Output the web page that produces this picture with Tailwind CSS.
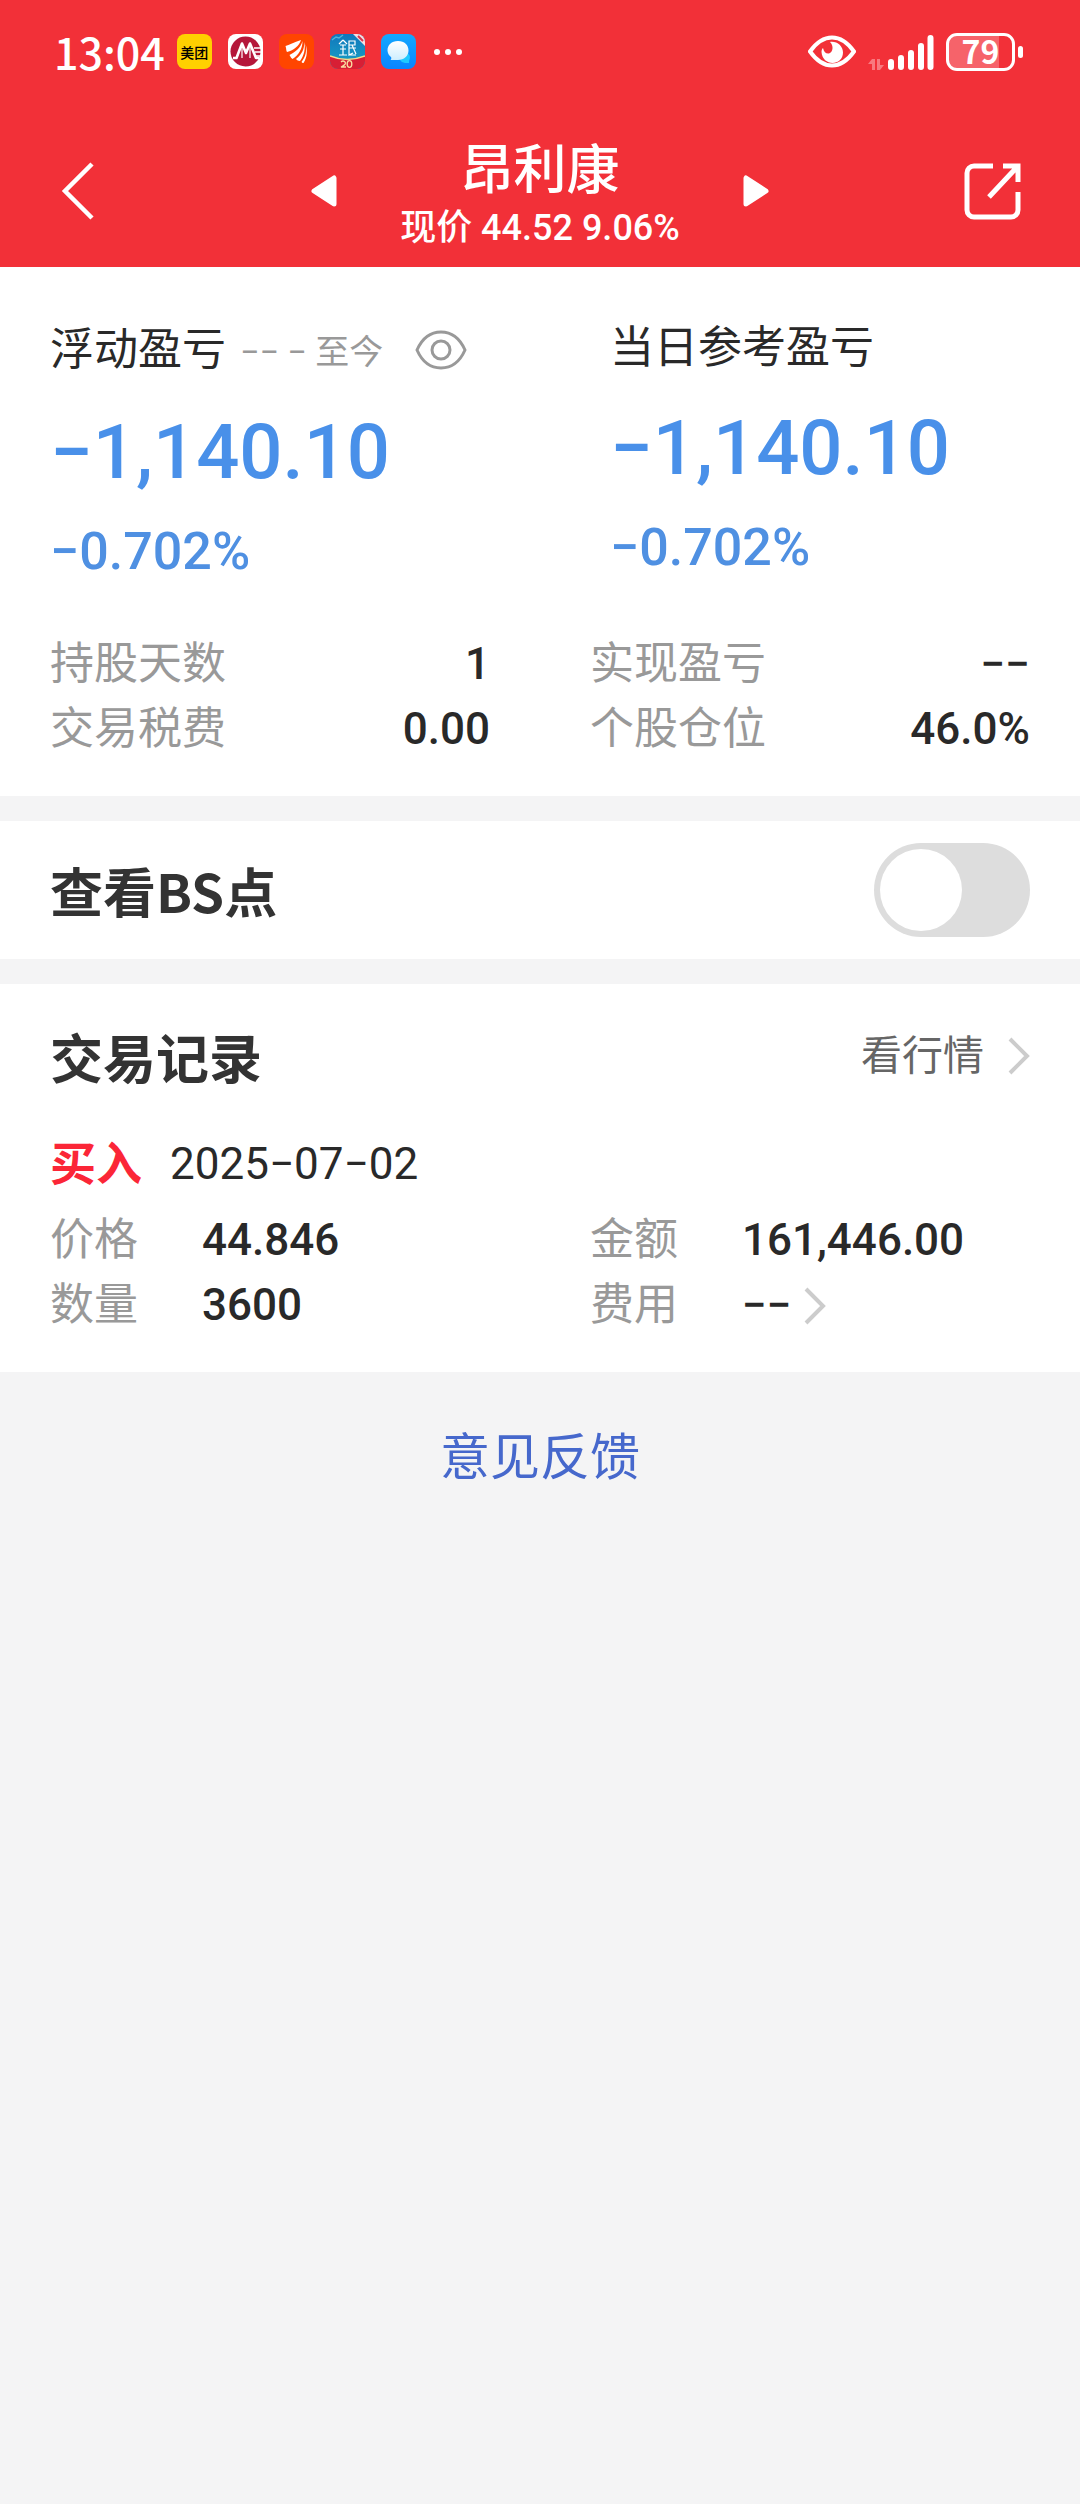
<!DOCTYPE html>
<html lang="zh-CN">
<head>
<meta charset="utf-8">
<meta name="viewport" content="width=device-width, initial-scale=1">
<title>昂利康</title>
<script src="https://cdn.jsdelivr.net/npm/@tailwindcss/browser@4"></script>
</head>
<body class="min-h-screen bg-[#f4f4f5] font-['Roboto','Noto_Sans_CJK_SC',sans-serif] text-[44px] leading-[60px] text-[#292929]">

<header class="bg-[#f23038] text-white">
  <!-- status bar -->
  <div class="flex h-[103px] items-center justify-between pl-[54px] pr-[57px]">
    <div class="flex items-center gap-4">
      <span class="-mr-1 pb-[2px] font-['Noto_Sans_CJK_SC',sans-serif] text-[43px] font-medium">13:04</span>
      <span class="flex size-[35px] items-center justify-center rounded-lg bg-[#ffd000] font-['Noto_Sans_CJK_SC',sans-serif] text-[14px] leading-none font-medium text-black">美团</span>
      <svg class="size-[35px]" viewBox="0 0 35 35" aria-hidden="true">
        <rect width="35" height="35" rx="8" fill="#fff"/>
        <circle cx="17.500" cy="17.500" r="15" fill="#b5173a"/>
        <path d="M26 14h8M27 18h7M28 22h6" fill="none" stroke="#fff" stroke-width="1.500"/>
        <path d="M5 24h3.500L14 9.500l4 9.500 4-9.500L28 24h3" fill="none" stroke="#fff" stroke-width="2.600" stroke-linejoin="round"/>
        <path d="M14 12v12M22 12v12" fill="none" stroke="#fff" stroke-width="1.200"/>
      </svg>
      <svg class="size-[35px]" viewBox="0 0 35 35" aria-hidden="true">
        <rect width="35" height="35" rx="8" fill="#ff4500"/>
        <path d="M22 6C15 8 10 11 6.500 12c1 3 .5 5 1.500 6 7-2 12-6 14-12zM23.500 7c-2 7-7 11-13 14 1 1 1 3 3 4 6-4 10-10 10-18zM25 8c1 7-3 13-8 17 1 1 2 2 4 2 4-5 6-13 4-19zM26.500 10c1.500 7 0 13-4 18 1 1 1 1 2 1 4-6 4-13 2-19z" fill="#fff"/>
      </svg>
      <svg class="size-[35px]" viewBox="0 0 35 35" aria-hidden="true">
        <defs>
          <clipPath id="bankTile"><rect width="35" height="35" rx="8"/></clipPath>
          <linearGradient id="bankSky" x1="0" y1="0" x2="0" y2="1"><stop stop-color="#1277bd"/><stop offset="1" stop-color="#18a5c4"/></linearGradient>
        </defs>
        <g clip-path="url(#bankTile)">
          <rect width="35" height="35" fill="url(#bankSky)"/>
          <path d="M23 0h12v12z" fill="#f4dfe2"/>
          <path d="M28 2l5 5" stroke="#d8344c" stroke-width="2"/>
          <path d="M0 22q17 7 35 0v13H0z" fill="#d71f35"/>
          <path d="M0 22q17 7 35 0" fill="none" stroke="#f6d98a" stroke-width="1.500"/>
          <path d="M2 6l4-3 3 1 4-3" fill="none" stroke="#4fb4dc" stroke-width="1.500"/>
          <path d="M13 6l-4 4m4-4l4 4M10 11h6M10 15h6M13 11v10M9 21h8M19 7h6v4h-6zv14l4-2M19 14h7M22 11l4 9M20 21h6" fill="none" stroke="#fff" stroke-width="1.200"/>
          <path d="M11 28q2-2 4 0t-4 5h5" fill="none" stroke="#f9dca0" stroke-width="1.300"/>
          <ellipse cx="19.500" cy="30" rx="2.300" ry="3.300" fill="none" stroke="#f9dca0" stroke-width="1.300"/>
        </g>
      </svg>
      <svg class="size-[35px]" viewBox="0 0 35 35" aria-hidden="true">
        <defs>
          <linearGradient id="chatTile" x1="0" y1="0" x2="0" y2="1"><stop stop-color="#12a8ff"/><stop offset="1" stop-color="#0a84ff"/></linearGradient>
          <linearGradient id="chatBubble" x1="0" y1="0" x2="0" y2="1"><stop stop-color="#fff"/><stop offset="1" stop-color="#cdeeff"/></linearGradient>
        </defs>
        <rect width="35" height="35" rx="8" fill="url(#chatTile)"/>
        <path d="M25 18a6 6 0 0 1 3 9v2h-4a6 6 0 0 1-5-3z" fill="#1fc9ff"/>
        <path d="M17 7c6.500 0 10.500 4 10.500 9.500S23 26 17 26H9.500c1-1 1-2 .5-3-2-1.500-3.500-4-3.500-6.500C6.500 11 10.500 7 17 7z" fill="url(#chatBubble)"/>
      </svg>
      <svg class="ml-[2px] h-[6px] w-7" viewBox="0 0 28 6" fill="#fff" aria-hidden="true"><circle cx="3" cy="3" r="3"/><circle cx="14" cy="3" r="3"/><circle cx="25" cy="3" r="3"/></svg>
    </div>
    <div class="flex items-center">
      <svg class="mr-3 h-[33px] w-12" viewBox="0 0 48 33" aria-hidden="true">
        <path d="M2 16.500Q12 2.500 24 2.500t22 14Q36 30.500 24 30.500T2 16.500z" fill="none" stroke="#fff" stroke-width="4"/>
        <path d="M22 7c7-1 13 4 13 10.500S30 28 24.500 28 14 24 13.500 17c0-2 .5-3 1.500-4 1 4 3 6 6 5.500 4-1 5-8 1-11.500z" fill="#fff"/>
      </svg>
      <svg class="mr-3 h-9 w-[66px]" viewBox="0 0 66 36" aria-hidden="true">
        <path d="M0 30l4-5h3v11H4v-6zM9 25h3v6h4l-4 5H9z" fill="#f8797f"/>
        <g stroke="#fff" stroke-width="6" stroke-linecap="round"><path d="M23 28v5M33 24v9M43 19v14M53 12v21M62.500 4v29"/></g>
      </svg>
      <div class="flex h-[38px] w-[69px] items-center justify-center rounded-[11px] border-3 border-white bg-linear-to-r from-[#f6636a] from-80% to-[#f23038] to-80% pb-[3px] font-['Noto_Sans_CJK_SC',sans-serif] text-[32px] leading-none font-bold">79</div>
      <div class="ml-[3px] h-3 w-[5px] rounded-full bg-white"></div>
    </div>
  </div>

  <!-- title bar -->
  <div class="flex items-center justify-between px-[58px] pt-3">
    <button type="button" aria-label="返回" class="flex h-[152px] w-[60px] items-center">
      <svg class="h-[58px] w-[38px]" viewBox="0 0 38 58" fill="none" stroke="#fff" stroke-width="4.500"><path d="M34 2L7 29l27 27"/></svg>
    </button>
    <div class="flex w-[458px] items-center justify-between">
      <button type="button" aria-label="上一只">
        <svg class="h-8 w-[26px]" viewBox="0 0 26 32" fill="#fff" stroke="#fff" stroke-width="5" stroke-linejoin="round"><path d="M3 16L23 3v26z"/></svg>
      </button>
      <div class="pt-2 text-center font-medium">
        <h1 class="font-['Noto_Sans_CJK_SC',sans-serif] text-[53px] leading-[62px] font-medium">昂利康</h1>
        <p class="pt-1 text-[36px] leading-[54px]">现价 44.52 9.06%</p>
      </div>
      <button type="button" aria-label="下一只">
        <svg class="h-8 w-[26px]" viewBox="0 0 26 32" fill="#fff" stroke="#fff" stroke-width="5" stroke-linejoin="round"><path d="M23 16L3 3v26z"/></svg>
      </button>
    </div>
    <button type="button" aria-label="分享" class="flex h-[152px] w-[60px] items-center justify-end">
      <svg class="h-[58px] w-[58px]" viewBox="0 0 58 58" fill="none" stroke="#fff" stroke-width="5"><path d="M29 4H10a7 7 0 0 0-7 7v37a7 7 0 0 0 7 7h37a7 7 0 0 0 7-7V30M39 4h15v16M54 4L25 35"/></svg>
    </button>
  </div>
</header>

<main class="flex flex-col gap-[25px]">
  <section class="bg-white px-[50px] pt-[51px] pb-[34px]">
    <div class="grid grid-cols-2 gap-x-[100px]">
      <div class="whitespace-nowrap">
        <div class="flex h-16 items-center">
          <h2>浮动盈亏</h2>
          <span class="ml-[14px] pt-1 text-[34px] text-[#999]">−− − 至今</span>
          <button type="button" aria-label="隐藏金额" class="ml-8">
            <svg class="h-10 w-[52px]" viewBox="0 0 52 40" fill="none" stroke="#999" stroke-width="3"><path d="M2 20Q10 2 26 2t24 18Q42 38 26 38T2 20z"/><circle cx="26" cy="20" r="9"/></svg>
          </button>
        </div>
        <p class="mt-5 text-[76px] leading-[100px] font-medium text-[#4990e9]">−1,140.10</p>
        <p class="mt-5 text-[52px] font-medium text-[#4f90e2]">−0.702%</p>
      </div>
      <div class="pl-5 whitespace-nowrap">
        <h2>当日参考盈亏</h2>
        <p class="mt-5 text-[76px] leading-[100px] font-medium text-[#4990e9]">−1,140.10</p>
        <p class="mt-5 text-[52px] font-medium text-[#4f90e2]">−0.702%</p>
      </div>
    </div>
    <dl class="mt-[50px] grid grid-cols-2 gap-x-[100px] leading-[65px]">
      <div class="flex justify-between"><dt class="text-[#999]">持股天数</dt><dd class="font-medium">1</dd></div>
      <div class="flex justify-between"><dt class="text-[#999]">实现盈亏</dt><dd class="font-medium">−−</dd></div>
      <div class="flex justify-between"><dt class="text-[#999]">交易税费</dt><dd class="font-medium">0.00</dd></div>
      <div class="flex justify-between"><dt class="text-[#999]">个股仓位</dt><dd class="font-medium">46.0%</dd></div>
    </dl>
  </section>

  <section class="flex items-center justify-between bg-white px-[50px] py-[22px]">
    <label for="bs" class="font-['Noto_Sans_CJK_SC',sans-serif] text-[53px] leading-[80px] font-bold text-[#333]">查看BS点</label>
    <input id="bs" type="checkbox" role="switch" class="h-[94px] w-[156px] appearance-none rounded-full bg-[#ddd] p-[6px] before:block before:size-[82px] before:rounded-full before:bg-white checked:bg-[#f23038] checked:before:ml-auto">
  </section>

  <section class="bg-white px-[50px] pt-8 pb-[34px]">
    <div class="flex items-center justify-between">
      <h2 class="font-['Noto_Sans_CJK_SC',sans-serif] text-[53px] leading-[80px] font-bold text-[#333]">交易记录</h2>
      <a href="#" class="flex items-center gap-6 text-[41px] text-[#666]">看行情
        <svg class="h-[38px] w-[22px]" viewBox="0 0 22 38" fill="none" stroke="#ccc" stroke-width="4" aria-hidden="true"><path d="M2 2l17 17L2 36"/></svg>
      </a>
    </div>
    <div class="mt-[38px] flex items-center gap-7">
      <span class="text-[46px] font-bold text-[#fb2637]">买入</span>
      <time datetime="2025-07-02">2025−07−02</time>
    </div>
    <dl class="mt-[14px] grid grid-cols-2 gap-x-[100px] leading-[65px]">
      <div class="grid grid-cols-[152px_1fr]"><dt class="text-[#999]">价格</dt><dd class="font-medium">44.846</dd></div>
      <div class="grid grid-cols-[152px_1fr]"><dt class="text-[#999]">金额</dt><dd class="font-medium">161,446.00</dd></div>
      <div class="grid grid-cols-[152px_1fr]"><dt class="text-[#999]">数量</dt><dd class="font-medium">3600</dd></div>
      <div class="grid grid-cols-[152px_1fr]"><dt class="text-[#999]">费用</dt><dd class="font-medium"><a href="#" class="flex items-center gap-3">−−
        <svg class="h-[38px] w-[22px]" viewBox="0 0 22 38" fill="none" stroke="#ccc" stroke-width="4" aria-hidden="true"><path d="M2 2l17 17L2 36"/></svg></a></dd></div>
    </dl>
  </section>
</main>

<footer class="flex justify-center pt-[50px]">
  <a href="#" class="text-[50px] leading-[72px] text-[#4668cc]">意见反馈</a>
</footer>
</body>
</html>
